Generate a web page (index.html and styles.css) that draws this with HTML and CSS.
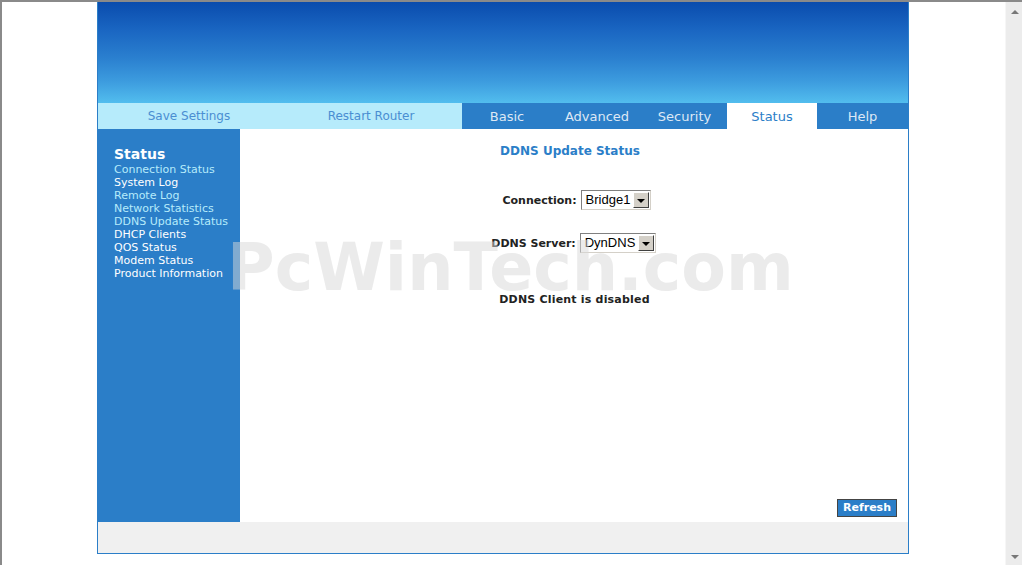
FILE: index.html
```html
<!DOCTYPE html>
<html>
<head>
<meta charset="utf-8">
<title>DDNS Update Status</title>
<link rel="stylesheet" href="styles.css">
</head>
<body>
<div class="window">
  <div class="viewport">
    <div class="page">
      <div class="banner"></div>
      <div class="nav">
        <div class="tools">
          <a class="tool">Save Settings</a>
          <a class="tool">Restart Router</a>
        </div>
        <div class="tabs">
          <a class="tab t-basic">Basic</a>
          <a class="tab t-adv">Advanced</a>
          <a class="tab t-sec">Security</a>
          <a class="tab t-status active">Status</a>
          <a class="tab t-help">Help</a>
        </div>
      </div>
      <div class="body">
        <div class="side">
          <div class="side-title">Status</div>
          <a class="side-link visited">Connection Status</a>
          <a class="side-link">System Log</a>
          <a class="side-link visited">Remote Log</a>
          <a class="side-link visited">Network Statistics</a>
          <a class="side-link visited">DDNS Update Status</a>
          <a class="side-link">DHCP Clients</a>
          <a class="side-link">QOS Status</a>
          <a class="side-link">Modem Status</a>
          <a class="side-link">Product Information</a>
        </div>
        <div class="main">
          <div class="title">DDNS Update Status</div>
          <div class="row row-conn">
            <span class="label">Connection:</span>
            <span class="select s-conn"><span class="val">Bridge1</span><span class="btn"><span class="tri"></span></span></span>
          </div>
          <div class="row row-srv">
            <span class="label">DDNS Server:</span>
            <span class="select s-srv"><span class="val">DynDNS</span><span class="btn"><span class="tri"></span></span></span>
          </div>
          <div class="msg">DDNS Client is disabled</div>
          <div class="spacer"></div>
          <div class="actions"><span class="refresh">Refresh</span></div>
        </div>
      </div>
      <div class="foot"></div>
      <div class="watermark">PcWinTech.com</div>
    </div>
  </div>
  <div class="scrollbar">
    <span class="arrow up"></span>
    <span class="arrow down"></span>
  </div>
</div>
</body>
</html>
```

FILE: styles.css
```css
* { box-sizing: border-box; }
html, body { margin: 0; padding: 0; height: 100%; background: #fff; overflow: hidden; }
body { font-family: "DejaVu Sans", Verdana, sans-serif; }

.window {
  height: 565px;
  display: flex;
  border-top: 2px solid #8a8a8a;
  border-left: 2px solid #8a8a8a;
}
.viewport {
  flex: 1;
  display: flex;
  justify-content: center;
  align-items: flex-start;
  padding-right: 1px;
}
.scrollbar {
  width: 17px;
  background: #ececec;
  border-left: 1px solid #f6f6f6;
  display: flex;
  flex-direction: column;
  justify-content: space-between;
  align-items: center;
  padding: 8px 0 6px 2px;
}
.arrow { width: 0; height: 0; border-left: 4px solid transparent; border-right: 4px solid transparent; }
.arrow.up { border-bottom: 4px solid #777; }
.arrow.down { border-top: 4px solid #777; }

.page {
  position: relative;
  width: 812px;
  border-left: 1px solid #2b7ec8;
  border-right: 1px solid #2b7ec8;
  border-bottom: 1px solid #2b7ec8;
  display: flex;
  flex-direction: column;
}
.banner {
  height: 101px;
  background: linear-gradient(#0a4cad 0%, #1a66c2 28%, #2a7fcf 55%, #3c9bde 78%, #52bdee 100%);
}
.nav { height: 26px; display: flex; }
.tools { width: 364px; background: #b6ebfb; display: flex; }
.tool {
  flex: 1;
  text-align: center;
  font-size: 12px;
  line-height: 26px;
  color: #4a8ed2;
}
.tabs { flex: 1; background: #2b7ec8; display: flex; }
.tab {
  text-align: center;
  font-size: 13px;
  line-height: 27px;
  color: #dde8f5;
}
.t-basic { width: 90px; }
.t-adv { width: 90px; }
.t-sec { width: 85px; }
.t-status { width: 90px; }
.t-help { flex: 1; }
.tab.active { background: #fff; color: #2b7ec8; }

.body { height: 393px; display: flex; }
.side {
  width: 142px;
  background: #2b7ec8;
  padding: 17px 0 0 16px;
  display: flex;
  flex-direction: column;
}
.side-title { font-size: 14px; font-weight: bold; color: #fff; line-height: 17px; }
.side-link { font-size: 11px; line-height: 13px; color: #fff; white-space: nowrap; }
.side-link.visited { color: #b6ebfb; }

.main {
  flex: 1;
  display: flex;
  flex-direction: column;
  align-items: center;
  padding: 15px 11px 5px 0;
}
.title { font-size: 12px; font-weight: bold; color: #2b7ec8; line-height: 14px; padding-left: 3px; }
.row { display: flex; align-items: center; gap: 4px; }
.row-conn { margin-top: 32px; padding-left: 16px; }
.row-srv { margin-top: 23px; padding-left: 10px; }
.label { font-size: 11px; font-weight: bold; color: #222; }
.select {
  display: flex;
  align-items: stretch;
  height: 20px;
  background: #fff;
  border-top: 1px solid #808080;
  border-left: 1px solid #808080;
  border-bottom: 1px solid #d4d0c8;
  border-right: 1px solid #d4d0c8;
  padding: 1px;
  font-family: "Liberation Sans", Arial, sans-serif;
  font-size: 13px;
  color: #000;
}
.s-conn { width: 70px; }
.s-srv { width: 76px; }
.val { flex: 1; line-height: 16px; padding-left: 3px; }
.btn {
  width: 16px;
  background: #d4d0c8;
  border-top: 1px solid #fff;
  border-left: 1px solid #fff;
  border-right: 1px solid #404040;
  border-bottom: 1px solid #404040;
  display: flex;
  align-items: center;
  justify-content: center;
}
.tri { width: 0; height: 0; border-left: 4px solid transparent; border-right: 4px solid transparent; border-top: 4px solid #000; margin-top: 1px; }
.msg { margin-top: 40px; font-size: 11px; font-weight: bold; color: #222; padding-left: 12px; letter-spacing: 0.2px; }
.spacer { flex: 1; }
.actions { align-self: stretch; display: flex; justify-content: flex-end; }
.refresh {
  background: #2b7ec8;
  color: #fff;
  font-size: 11px;
  font-weight: bold;
  border: 1px solid #444;
  padding: 1px 5px 1px 5px;
  line-height: 14px;
}

.foot { height: 31px; background: #f0f0f0; }

.watermark {
  position: absolute;
  left: 129px;
  top: 228px;
  font-family: "DejaVu Sans", Verdana, sans-serif;
  font-weight: bold;
  font-size: 65px;
  letter-spacing: 0;
  color: rgba(216, 216, 216, 0.5);
  pointer-events: none;
  white-space: nowrap;
}
```
